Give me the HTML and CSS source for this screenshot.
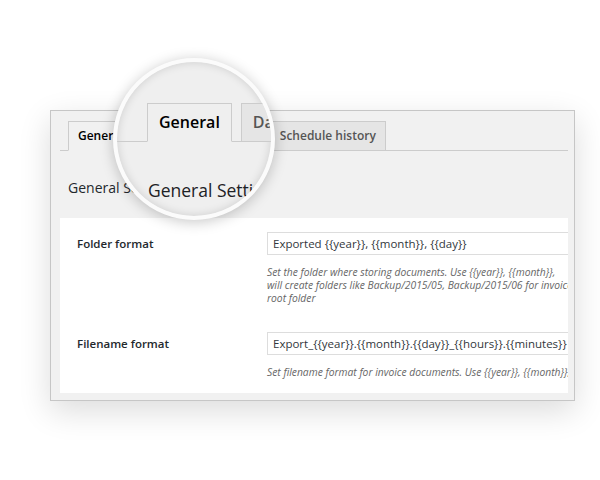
FILE: index.html
```html
<!DOCTYPE html>
<html lang="en">
<head>
    <meta charset="UTF-8">
    <meta name="viewport" content="width=device-width, initial-scale=1.0">
    <title>Export Settings</title>

    <link rel="stylesheet" href="styles.css">
</head>
<body>
    <div class="stage">

        <div class="settings-panel">
            <div class="nav-tabs">
                <span class="nav-tab active">General</span>
                <span class="nav-tab">Database backup</span>
                <span class="nav-tab">Schedule history</span>
            </div>

            <h2 class="section-title">General Settings</h2>

            <div class="form-box">
                <div class="form-row">
                    <label class="form-label">Folder format</label>
                    <div class="form-field">
                        <input type="text" class="text-input" value="Exported {{year}}, {{month}}, {{day}}">
                        <p class="description">Set the folder where storing documents. Use {{year}}, {{month}},<br>will create folders like Backup/2015/05, Backup/2015/06 for invoices. Leave blank to store in the<br>root folder</p>
                    </div>
                </div>

                <div class="form-row">
                    <label class="form-label">Filename format</label>
                    <div class="form-field">
                        <input type="text" class="text-input" value="Export_{{year}}.{{month}}.{{day}}_{{hours}}.{{minutes}}">
                        <p class="description">Set filename format for invoice documents. Use {{year}}, {{month}}, {{day}}, {{hours}}, {{minutes}} and {{number}}</p>
                    </div>
                </div>
            </div>
        </div>

        <!-- magnifier lies over the tabs -->
        <div class="magnifier">
            <div class="zoom-tabs">
                <span class="zoom-tab active">General</span>
                <span class="zoom-tab">Database backup</span>
            </div>
            <h2 class="zoom-title">General Settings</h2>
        </div>

    </div>
</body>
</html>
```

FILE: styles.css
```css
* {
    margin: 0;
    padding: 0;
    box-sizing: border-box;
    font-family: "Open Sans", "Liberation Sans", sans-serif;
}

body {
    background-color: #fff;
    color: #23282d;
    width: 600px;
    height: 480px;
    overflow: hidden;
}

.stage {
    position: relative;
    width: 600px;
    height: 480px;
    padding: 110px 0 0 50px;
}

.settings-panel {
    width: 525px;
    background-color: #f1f1f1;
    border: 1px solid #c6c6c6;
    padding: 10px 6px 7px 9px;
    box-shadow: 0 10px 30px rgba(0, 0, 0, 0.14);
}

.nav-tabs {
    display: flex;
    gap: 8px;
    padding-left: 8px;
    border-bottom: 1px solid #ccc;
}

.nav-tab {
    height: 30px;
    line-height: 28px;
    padding: 0 9px;
    margin-bottom: -1px;
    border: 1px solid #ccc;
    background-color: #e5e5e5;
    color: #555;
    font-size: 12px;
    font-weight: 600;
    white-space: nowrap;
}

.nav-tab.active {
    background-color: #f1f1f1;
    border-bottom-color: #f1f1f1;
    color: #000;
}

.section-title {
    font-size: 14px;
    font-weight: 400;
    line-height: 18px;
    margin: 28px 0 21px 8px;
    color: #23282d;
}

.form-box {
    background-color: #fff;
    padding: 14px 0 14px 17px;
    overflow: hidden;
}

.form-row {
    display: grid;
    grid-template-columns: 190px 420px;
}

.form-row + .form-row {
    margin-top: 27px;
}

.form-label {
    font-size: 11.5px;
    font-weight: 600;
    line-height: 23px;
    color: #23282d;
}

.text-input {
    display: block;
    width: 420px;
    height: 23px;
    padding: 0 5px;
    border: 1px solid #ddd;
    background-color: #fff;
    color: #32373c;
    font-size: 11.5px;
    outline: none;
}

.description {
    margin-top: 11px;
    font-size: 10.3px;
    line-height: 13px;
    font-style: italic;
    color: #666;
    white-space: nowrap;
}

.magnifier {
    position: absolute;
    left: 113px;
    top: 58px;
    width: 162px;
    height: 162px;
    border-radius: 50%;
    border: 4px solid #fbfbfb;
    background-color: #efefef;
    overflow: hidden;
    box-shadow: 0 2px 14px rgba(0, 0, 0, 0.22), inset 0 0 10px rgba(0, 0, 0, 0.14);
}

.zoom-tabs {
    display: flex;
    gap: 9px;
    width: 400px;
    margin-left: -100px;
    padding: 41px 0 0 130px;
    border-bottom: 1px solid #ccc;
}

.zoom-tab {
    height: 39px;
    line-height: 37px;
    padding: 0 11px;
    margin-bottom: -1px;
    border: 1px solid #ccc;
    background-color: #e5e5e5;
    color: #555;
    font-size: 16px;
    font-weight: 600;
    white-space: nowrap;
}

.zoom-tab.active {
    background-color: #efefef;
    border-bottom-color: #efefef;
    color: #000;
}

.zoom-title {
    font-size: 17.5px;
    font-weight: 400;
    line-height: 22px;
    margin: 37px 0 0 31px;
    white-space: nowrap;
    color: #1d2125;
}
```
